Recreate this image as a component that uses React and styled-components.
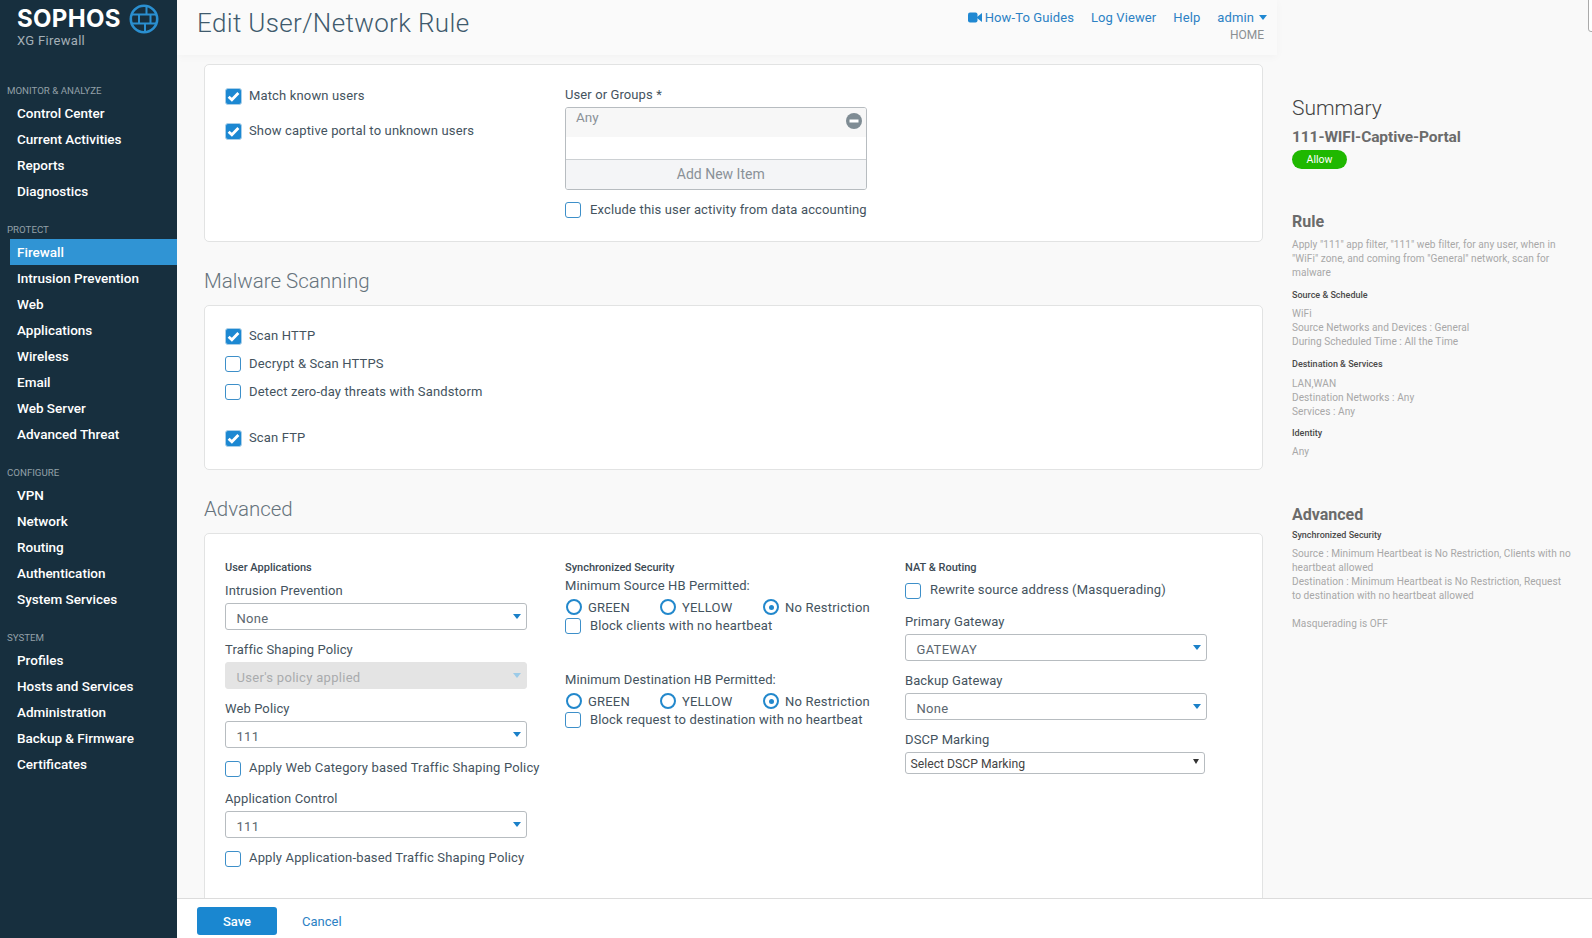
import styled, { createGlobalStyle } from "styled-components";

const GlobalStyle = createGlobalStyle`
  html, body { margin: 0; padding: 0; height: 100%; }
  body { font-family: Roboto, "Liberation Sans", sans-serif; color: #44535e; background: #f9f9f9; }
  * { box-sizing: border-box; }
`;

const Page = styled.div`
  display: flex;
  width: 1592px;
  height: 938px;
  overflow: hidden;
  position: relative;
`;

const Sidebar = styled.nav`
  width: 177px;
  flex: none;
  background: #172f3e;
  color: #fff;
`;

const Brand = styled.div`
  height: 79px;
  padding: 6px 0 0 17px;
`;

const BrandTop = styled.div`
  display: flex;
  align-items: center;
  gap: 8px;
  height: 25px;
`;

const BrandName = styled.span`
  font-family: Inter, sans-serif;
  font-weight: 700;
  font-size: 24px;
  letter-spacing: 0.3px;
  line-height: 25px;
`;

const BrandSub = styled.div`
  font-size: 13px;
  line-height: 18px;
  margin-top: 1px;
  color: #a4b0b7;
  letter-spacing: 0.3px;
`;

const NavGroup = styled.div`
  margin-bottom: 14px;
`;

const NavLabel = styled.div`
  height: 21px;
  line-height: 23px;
  padding-left: 7px;
  font-size: 9.7px;
  color: #93a0a8;
`;

const NavItem = styled.a`
  display: block;
  height: 26px;
  line-height: 27px;
  margin-left: 10px;
  padding-left: 7px;
  font-size: 13.5px;
  font-weight: 500;
  color: #fff;
  background: ${(p) => (p.$active ? "#3094d4" : "transparent")};
`;

const Main = styled.div`
  flex: 1;
  display: flex;
  flex-direction: column;
  min-width: 0;
`;

const Body = styled.div`
  flex: 1;
  display: flex;
  min-height: 0;
  overflow: hidden;
`;

const Column = styled.div`
  width: 1115px;
  flex: none;
`;

const TopBar = styled.header`
  width: 1100px;
  height: 55px;
  display: flex;
  justify-content: space-between;
  padding: 0 10px 0 20px;
  background: #fafafa;
  box-shadow: 0 2px 8px rgba(0, 0, 0, 0.03);
`;

const Title = styled.h1`
  margin: 0;
  font-size: 26px;
  font-weight: 300;
  line-height: 47px;
  letter-spacing: 0.35px;
  color: #3f5a6d;
`;

const TopLinks = styled.div`
  display: flex;
  flex-direction: column;
  align-items: flex-end;
  padding-top: 8px;
`;

const LinkRow = styled.div`
  display: flex;
  align-items: center;
  gap: 17px;
  height: 18px;
  font-size: 13px;
  color: #2c81c4;
`;

const TopLink = styled.a`
  display: flex;
  align-items: center;
  gap: ${(p) => p.$gap || 5}px;
  letter-spacing: 0.1px;
`;

const Home = styled.div`
  font-size: 12px;
  line-height: 17px;
  margin-top: 1px;
  padding-right: 3px;
  color: #8b8f92;
`;

const Caret = styled.span`
  width: 0;
  height: 0;
  border-left: 4px solid transparent;
  border-right: 4px solid transparent;
  border-top: 5px solid ${(p) => p.$color || "#2c81c4"};
`;

const Scroll = styled.div`
  padding: 9px 29px 0 27px;
`;

const Card = styled.section`
  background: #fff;
  border: 1px solid #e2e3e3;
  border-radius: 5px;
  padding: ${(p) => p.$pad || "22px 20px 0"};
  height: ${(p) => p.$h}px;
`;

const SectionTitle = styled.h2`
  margin: 0;
  height: 63px;
  line-height: 78px;
  font-size: 20.5px;
  font-weight: 300;
  color: #66737c;
`;

const Grid = styled.div`
  display: grid;
  grid-template-columns: 340px 340px 340px;
`;

const Row = styled.label`
  display: flex;
  align-items: center;
  height: 18px;
  font-size: 13px;
  letter-spacing: 0.15px;
  margin-bottom: ${(p) => p.$mb || 0}px;
  margin-top: ${(p) => p.$mt || 0}px;
  color: #44535e;
  white-space: nowrap;
`;

const RowText = styled.span`
  margin-top: -2px;
`;

const Box = styled.span`
  width: ${(p) => (p.$on ? 17 : 16)}px;
  height: ${(p) => (p.$on ? 17 : 16)}px;
  flex: none;
  display: flex;
  align-items: center;
  justify-content: center;
  border-radius: 3px;
  margin-right: ${(p) => (p.$wide ? 9 : p.$on ? 7 : 8)}px;
  background: ${(p) => (p.$on ? "#1c88d2" : "#fff")};
  border: 1.5px solid ${(p) => (p.$on ? "#a9cfe9" : "#3d8fc9")};
`;

const Check = ({ on, wide, children, mb, mt }) => (
  <Row $mb={mb} $mt={mt}>
    <Box $on={on} $wide={wide}>
      {on && (
        <svg width="13" height="11" viewBox="0 0 12 10">
          <path d="M1.5 5.2 L4.5 8 L10.5 1.8" fill="none" stroke="#fff" strokeWidth="2.6" />
        </svg>
      )}
    </Box>
    <RowText>{children}</RowText>
  </Row>
);

const Label = styled.div`
  height: 18px;
  line-height: 18px;
  font-size: 13px;
  letter-spacing: 0.1px;
  margin-bottom: ${(p) => p.$mb ?? 3.5}px;
  margin-top: ${(p) => p.$mt || 0}px;
  white-space: nowrap;
`;

const SubHead = styled.div`
  height: 18px;
  line-height: 20px;
  font-size: 11px;
  font-weight: 500;
  margin-bottom: ${(p) => p.$mb ?? 5.5}px;
  color: #3c4a54;
`;

const Select = styled.div`
  width: 301.5px;
  height: 27px;
  display: flex;
  justify-content: space-between;
  padding: 5px 5px 0 10.5px;
  margin-bottom: 10.5px;
  line-height: 20px;
  font-size: 13px;
  letter-spacing: 0.3px;
  border: 1px solid #b7bcc0;
  border-radius: 3px;
  background: ${(p) => (p.$disabled ? "#e4e4e4" : "#fff")};
  border-color: ${(p) => (p.$disabled ? "#e4e4e4" : "#b7bcc0")};
  color: ${(p) => (p.$disabled ? "#a9abad" : "#5c676f")};
  span:last-child { margin-top: 5px; }
`;

const NativeSelect = styled.div`
  width: 300px;
  height: 22px;
  display: flex;
  justify-content: space-between;
  padding: 0 5px 0 4.5px;
  line-height: 22px;
  font-size: 12.2px;
  border: 1px solid #b7bcc0;
  border-radius: 3px;
  color: #444;
  span:last-child {
    margin-top: 6px;
    border-left-width: 3.5px;
    border-right-width: 3.5px;
  }
`;

const PickList = styled.div`
  width: 301.5px;
  height: 83px;
  margin-bottom: 11px;
  border: 1px solid #b7bcc0;
  border-radius: 3px;
  overflow: hidden;
`;

const PickRow = styled.div`
  display: flex;
  justify-content: space-between;
  height: 29px;
  padding: 0 4px 0 10px;
  background: #f7f7f7;
  color: #8a9197;
  font-size: 13.5px;
  line-height: 19px;
  svg { margin-top: 5px; }
`;

const PickAdd = styled.div`
  margin-top: 22px;
  height: 31px;
  line-height: 28px;
  text-align: center;
  padding-left: 10px;
  font-size: 14px;
  color: #8a9197;
  background: #f4f5f7;
  border-top: 1px solid #ccd0d3;
`;

const PickColumn = styled.div`
  margin-top: -1px;
`;

const Radios = styled.div`
  display: grid;
  grid-template-columns: 94px 103px auto;
  height: 18px;
  align-items: center;
  margin-bottom: 1px;
  padding-left: 1px;
`;

const RadioItem = styled.label`
  display: flex;
  align-items: center;
  gap: 6px;
  font-size: 13px;
  letter-spacing: 0.2px;
  white-space: nowrap;
`;

const Ring = styled.span`
  width: 16px;
  height: 16px;
  flex: none;
  display: flex;
  align-items: center;
  justify-content: center;
  border-radius: 50%;
  border: 2.5px solid #2288cc;
  background: #fff;
  &::after {
    content: "";
    width: 5px;
    height: 5px;
    border-radius: 50%;
    background: ${(p) => (p.$on ? "#2288cc" : "transparent")};
  }
`;

const HbRadios = () => (
  <Radios>
    <RadioItem><Ring />GREEN</RadioItem>
    <RadioItem><Ring />YELLOW</RadioItem>
    <RadioItem><Ring $on />No Restriction</RadioItem>
  </Radios>
);

const Summary = styled.aside`
  flex: 1;
  padding: 0 20px 0 0;
  font-size: 11px;
  color: #a8a8a8;
`;

const SummaryTitle = styled.h2`
  margin: 0;
  padding-top: 94px;
  font-size: 21px;
  font-weight: 300;
  line-height: 28px;
  color: #444;
`;

const RuleName = styled.div`
  font-size: 15.5px;
  font-weight: 700;
  line-height: 20px;
  letter-spacing: -0.1px;
  margin-top: 5px;
  color: #6b6b6b;
`;

const Pill = styled.span`
  display: block;
  width: 55px;
  height: 19px;
  margin-top: 3px;
  border-radius: 10px;
  background: #1fb800;
  color: #fff;
  text-align: center;
  line-height: 19px;
  font-size: 10.5px;
`;

const PanelHead = styled.h3`
  margin: ${(p) => p.$mt}px 0 0;
  font-size: 16px;
  font-weight: 700;
  line-height: 20px;
  color: #6b6b6b;
`;

const Para = styled.p`
  margin: ${(p) => p.$mt || 0}px 0 0;
  line-height: 14px;
  font-size: 10.1px;
  letter-spacing: 0.05px;
`;

const Small = styled.h4`
  margin: ${(p) => p.$mt}px 0 0;
  line-height: 14px;
  font-size: 9px;
  font-weight: 500;
  color: #4a4a4a;
`;

const Footer = styled.footer`
  height: 40px;
  flex: none;
  display: flex;
  align-items: flex-start;
  padding: 8px 0 0 20px;
  background: #fff;
  border-top: 1px solid #dcdcdc;
`;

const Save = styled.button`
  width: 80px;
  height: 28px;
  border: 0;
  border-radius: 3px;
  background: #1a87d0;
  color: #fff;
  font: 500 13px Roboto, sans-serif;
`;

const Cancel = styled.a`
  margin-left: 25px;
  line-height: 30px;
  font-size: 13px;
  color: #2c81c4;
`;

const CornerTab = styled.div`
  position: absolute;
  top: -2px;
  right: -2px;
  width: 6px;
  height: 34px;
  background: #fff;
  border: 1px solid #aaa;
  border-radius: 0 0 0 3px;
`;

const nav = [
  ["MONITOR & ANALYZE", ["Control Center", "Current Activities", "Reports", "Diagnostics"]],
  ["PROTECT", ["Firewall", "Intrusion Prevention", "Web", "Applications", "Wireless", "Email", "Web Server", "Advanced Threat"]],
  ["CONFIGURE", ["VPN", "Network", "Routing", "Authentication", "System Services"]],
  ["SYSTEM", ["Profiles", "Hosts and Services", "Administration", "Backup & Firmware", "Certificates"]],
];

const Globe = () => (
  <svg width="30" height="30" viewBox="0 0 30 30" fill="none" stroke="#2a8fd0" strokeWidth="2.6">
    <circle cx="15" cy="15" r="13.2" />
    <path strokeWidth="2" d="M3 10.5H27M3 19.5H27M10 10.5V19.5M21.5 10.5V19.5M17.5 2.5V10.5M16 19.5V27.5" />
  </svg>
);

const App = () => (
  <Page>
    <GlobalStyle />
    <Sidebar>
      <Brand>
        <BrandTop>
          <BrandName>SOPHOS</BrandName>
          <Globe />
        </BrandTop>
        <BrandSub>XG Firewall</BrandSub>
      </Brand>
      {nav.map(([label, items]) => (
        <NavGroup key={label}>
          <NavLabel>{label}</NavLabel>
          {items.map((item) => (
            <NavItem key={item} $active={item === "Firewall"}>{item}</NavItem>
          ))}
        </NavGroup>
      ))}
    </Sidebar>
    <Main>
      <Body>
        <Column>
          <TopBar>
            <Title>Edit User/Network Rule</Title>
            <TopLinks>
              <LinkRow>
                <TopLink $gap={3}>
                  <svg width="14" height="11" viewBox="0 0 14 11" fill="#2088d2">
                    <rect x="0" y="0.5" width="9.5" height="10" rx="2" />
                    <path d="M9 5 L14 1 V10 L9 6Z" />
                  </svg>
                  How-To Guides
                </TopLink>
                <TopLink>Log Viewer</TopLink>
                <TopLink>Help</TopLink>
                <TopLink>admin <Caret $color="#2088d2" /></TopLink>
              </LinkRow>
              <Home>HOME</Home>
            </TopLinks>
          </TopBar>
          <Scroll>
            <Card $h={178}>
              <Grid>
                <div>
                  <Check on mb={17}>Match known users</Check>
                  <Check on>Show captive portal to unknown users</Check>
                </div>
                <PickColumn>
                  <Label $mb={3}>User or Groups *</Label>
                  <PickList>
                    <PickRow>
                      Any
                      <svg width="16" height="16" viewBox="0 0 16 16">
                        <circle cx="8" cy="8" r="8" fill="#7f8c94" />
                        <rect x="3.5" y="6.5" width="9" height="3" fill="#fff" />
                      </svg>
                    </PickRow>
                    <PickAdd>Add New Item</PickAdd>
                  </PickList>
                  <Check wide>Exclude this user activity from data accounting</Check>
                </PickColumn>
              </Grid>
            </Card>
            <SectionTitle>Malware Scanning</SectionTitle>
            <Card $h={165} $pad="21px 20px 0">
              <Check on mb={10}>Scan HTTP</Check>
              <Check mb={10}>Decrypt &amp; Scan HTTPS</Check>
              <Check mb={28}>Detect zero-day threats with Sandstorm</Check>
              <Check on>Scan FTP</Check>
            </Card>
            <SectionTitle>Advanced</SectionTitle>
            <Card $h={420} $pad="24px 20px 0">
              <Grid>
                <div>
                  <SubHead>User Applications</SubHead>
                  <Label>Intrusion Prevention</Label>
                  <Select><span>None</span><Caret $color="#1a80c8" /></Select>
                  <Label>Traffic Shaping Policy</Label>
                  <Select $disabled><span>User's policy applied</span><Caret $color="#9ccbe8" /></Select>
                  <Label>Web Policy</Label>
                  <Select><span>111</span><Caret $color="#1a80c8" /></Select>
                  <Check mt={11.5} mb={12}>Apply Web Category based Traffic Shaping Policy</Check>
                  <Label>Application Control</Label>
                  <Select><span>111</span><Caret $color="#1a80c8" /></Select>
                  <Check mt={11.5}>Apply Application-based Traffic Shaping Policy</Check>
                </div>
                <div>
                  <SubHead $mb={1}>Synchronized Security</SubHead>
                  <Label $mb={3}>Minimum Source HB Permitted:</Label>
                  <HbRadios />
                  <Check wide>Block clients with no heartbeat</Check>
                  <Label $mt={36} $mb={3}>Minimum Destination HB Permitted:</Label>
                  <HbRadios />
                  <Check wide>Block request to destination with no heartbeat</Check>
                </div>
                <div>
                  <SubHead>NAT &amp; Routing</SubHead>
                  <Check wide mb={13}>Rewrite source address (Masquerading)</Check>
                  <Label>Primary Gateway</Label>
                  <Select><span>GATEWAY</span><Caret $color="#1a80c8" /></Select>
                  <Label>Backup Gateway</Label>
                  <Select><span>None</span><Caret $color="#1a80c8" /></Select>
                  <Label>DSCP Marking</Label>
                  <NativeSelect><span>Select DSCP Marking</span><Caret $color="#333" /></NativeSelect>
                </div>
              </Grid>
            </Card>
          </Scroll>
        </Column>
        <Summary>
          <SummaryTitle>Summary</SummaryTitle>
          <RuleName>111-WIFI-Captive-Portal</RuleName>
          <Pill>Allow</Pill>
          <PanelHead $mt={43}>Rule</PanelHead>
          <Para $mt={6}>Apply "111" app filter, "111" web filter, for any user, when in<br />"WiFi" zone, and coming from "General" network, scan for<br />malware</Para>
          <Small $mt={8}>Source &amp; Schedule</Small>
          <Para $mt={5}>WiFi<br />Source Networks and Devices : General<br />During Scheduled Time : All the Time</Para>
          <Small $mt={8}>Destination &amp; Services</Small>
          <Para $mt={6}>LAN,WAN<br />Destination Networks : Any<br />Services : Any</Para>
          <Small $mt={7}>Identity</Small>
          <Para $mt={5}>Any</Para>
          <PanelHead $mt={46}>Advanced</PanelHead>
          <Small $mt={3}>Synchronized Security</Small>
          <Para $mt={5}>Source : Minimum Heartbeat is No Restriction, Clients with no<br />heartbeat allowed<br />Destination : Minimum Heartbeat is No Restriction, Request<br />to destination with no heartbeat allowed</Para>
          <Para $mt={14}>Masquerading is OFF</Para>
        </Summary>
      </Body>
      <Footer>
        <Save>Save</Save>
        <Cancel>Cancel</Cancel>
      </Footer>
    </Main>
    <CornerTab />
  </Page>
);

export default App;
